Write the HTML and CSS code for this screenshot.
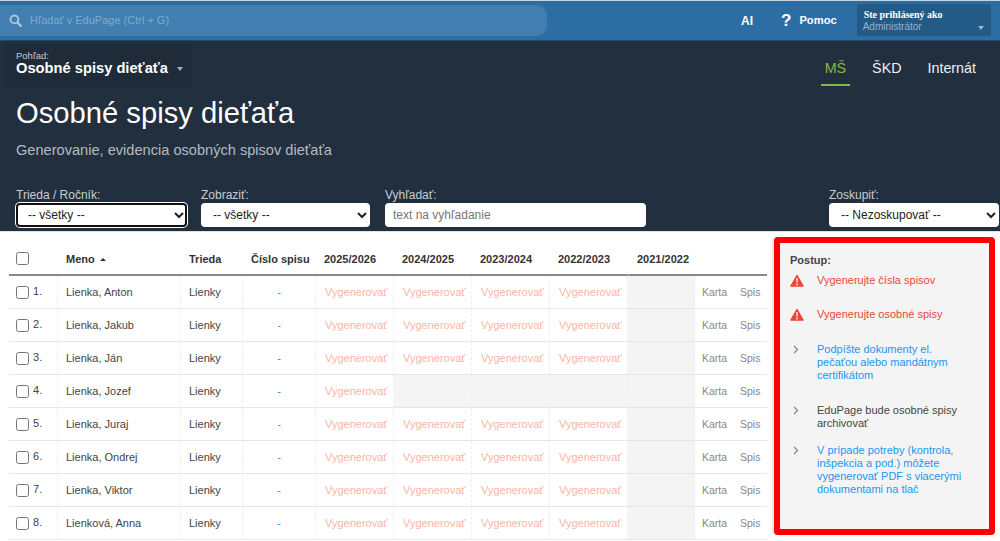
FILE: index.html
```html
<!DOCTYPE HTML>
<html lang="sk">
  <head>
    <meta charset="utf-8">
    <title>Osobné spisy dieťaťa</title>
    <link rel="stylesheet" href="styles.css">
  </head>
  <body>

    <div class="topbar">
      <div class="searchbox">
        <svg class="searchicon" width="13" height="13" viewBox="0 0 13 13"><circle cx="5.4" cy="5.4" r="3.9" fill="none" stroke="#a9c6dc" stroke-width="2"/><path d="M8.4 8.4l3.4 3.4" stroke="#a9c6dc" stroke-width="2.4" stroke-linecap="round"/></svg>
        <span>Hľadať v EduPage (Ctrl + G)</span>
      </div>
      <a class="top-ai">AI</a>
      <a class="top-help"><b>?</b><span>Pomoc</span></a>
      <div class="userbox">
        <div class="userbox-title">Ste prihlásený ako</div>
        <div class="userbox-name">Administrátor</div>
        <i class="caret caret-user"></i>
      </div>
    </div>

    <div class="header">
      <div class="header-top">
        <div class="viewbox">
          <div class="viewbox-label">Pohľad:</div>
          <div class="viewbox-name">Osobné spisy dieťaťa <i class="caret caret-view"></i></div>
        </div>
        <div class="tabs">
          <a class="tab tab-active">MŠ</a>
          <a class="tab">ŠKD</a>
          <a class="tab">Internát</a>
        </div>
      </div>
      <h1>Osobné spisy dieťaťa</h1>
      <p class="subtitle">Generovanie, evidencia osobných spisov dieťaťa</p>
      <div class="filters">
        <label class="filter filter-class">Trieda / Ročník:
          <select class="focused"><option>-- všetky --</option></select>
        </label>
        <label class="filter filter-show">Zobraziť:
          <select><option>-- všetky --</option></select>
        </label>
        <label class="filter filter-search">Vyhľadať:
          <input type="text" placeholder="text na vyhľadanie">
        </label>
        <label class="filter filter-group">Zoskupiť:
          <select><option>-- Nezoskupovať --</option></select>
        </label>
      </div>
    </div>

    <div class="main">
      <div class="tablewrap">
        <table class="list">
          <colgroup>
            <col class="c-check"><col class="c-name"><col class="c-class"><col class="c-num">
            <col class="c-year"><col class="c-year"><col class="c-year"><col class="c-year">
            <col class="c-last"><col class="c-card"><col class="c-file">
          </colgroup>
          <thead>
            <tr>
              <th><input type="checkbox"></th>
              <th>Meno <i class="caret-up"></i></th>
              <th>Trieda</th>
              <th>Číslo spisu</th>
              <th>2025/2026</th>
              <th>2024/2025</th>
              <th>2023/2024</th>
              <th>2022/2023</th>
              <th>2021/2022</th>
              <th></th>
              <th></th>
            </tr>
          </thead>
          <tbody>
            <tr>
              <td><input type="checkbox"> 1.</td><td>Lienka, Anton</td><td>Lienky</td><td class="num">-</td>
              <td class="gen">Vygenerovať</td><td class="gen">Vygenerovať</td><td class="gen">Vygenerovať</td><td class="gen">Vygenerovať</td>
              <td class="empty"></td><td class="act">Karta</td><td class="act">Spis</td>
            </tr>
            <tr>
              <td><input type="checkbox"> 2.</td><td>Lienka, Jakub</td><td>Lienky</td><td class="num">-</td>
              <td class="gen">Vygenerovať</td><td class="gen">Vygenerovať</td><td class="gen">Vygenerovať</td><td class="gen">Vygenerovať</td>
              <td class="empty"></td><td class="act">Karta</td><td class="act">Spis</td>
            </tr>
            <tr>
              <td><input type="checkbox"> 3.</td><td>Lienka, Ján</td><td>Lienky</td><td class="num">-</td>
              <td class="gen">Vygenerovať</td><td class="gen">Vygenerovať</td><td class="gen">Vygenerovať</td><td class="gen">Vygenerovať</td>
              <td class="empty"></td><td class="act">Karta</td><td class="act">Spis</td>
            </tr>
            <tr>
              <td><input type="checkbox"> 4.</td><td>Lienka, Jozef</td><td>Lienky</td><td class="num">-</td>
              <td class="gen">Vygenerovať</td><td class="empty"></td><td class="empty"></td><td class="empty"></td>
              <td class="empty"></td><td class="act">Karta</td><td class="act">Spis</td>
            </tr>
            <tr>
              <td><input type="checkbox"> 5.</td><td>Lienka, Juraj</td><td>Lienky</td><td class="num">-</td>
              <td class="gen">Vygenerovať</td><td class="gen">Vygenerovať</td><td class="gen">Vygenerovať</td><td class="gen">Vygenerovať</td>
              <td class="empty"></td><td class="act">Karta</td><td class="act">Spis</td>
            </tr>
            <tr>
              <td><input type="checkbox"> 6.</td><td>Lienka, Ondrej</td><td>Lienky</td><td class="num">-</td>
              <td class="gen">Vygenerovať</td><td class="gen">Vygenerovať</td><td class="gen">Vygenerovať</td><td class="gen">Vygenerovať</td>
              <td class="empty"></td><td class="act">Karta</td><td class="act">Spis</td>
            </tr>
            <tr>
              <td><input type="checkbox"> 7.</td><td>Lienka, Viktor</td><td>Lienky</td><td class="num">-</td>
              <td class="gen">Vygenerovať</td><td class="gen">Vygenerovať</td><td class="gen">Vygenerovať</td><td class="gen">Vygenerovať</td>
              <td class="empty"></td><td class="act">Karta</td><td class="act">Spis</td>
            </tr>
            <tr>
              <td><input type="checkbox"> 8.</td><td>Lienková, Anna</td><td>Lienky</td><td class="num">-</td>
              <td class="gen">Vygenerovať</td><td class="gen">Vygenerovať</td><td class="gen">Vygenerovať</td><td class="gen">Vygenerovať</td>
              <td class="empty"></td><td class="act">Karta</td><td class="act">Spis</td>
            </tr>
          </tbody>
        </table>
      </div>

      <div class="steps">
        <div class="steps-title">Postup:</div>
        <div class="step step-warn step-first">
          <svg width="14" height="13" viewBox="0 0 14 13"><path d="M7 1L13.4 12.2H.6z" fill="#f04438" stroke="#f04438" stroke-width="1" stroke-linejoin="round"/><path d="M6.2 4.2h1.6l-.3 4.6h-1zM6.2 9.7h1.6v1.5H6.2z" fill="#fff"/></svg>
          <span>Vygenerujte čísla spisov</span>
        </div>
        <div class="step step-warn">
          <svg width="14" height="13" viewBox="0 0 14 13"><path d="M7 1L13.4 12.2H.6z" fill="#f04438" stroke="#f04438" stroke-width="1" stroke-linejoin="round"/><path d="M6.2 4.2h1.6l-.3 4.6h-1zM6.2 9.7h1.6v1.5H6.2z" fill="#fff"/></svg>
          <span>Vygenerujte osobné spisy</span>
        </div>
        <div class="step step-link">
          <svg class="chev" width="14" height="13" viewBox="0 0 14 13"><path d="M4 3l3.5 3.5L4 10" fill="none" stroke="#7d8a96" stroke-width="1.3"/></svg>
          <span>Podpíšte dokumenty el. pečaťou alebo mandátnym certifikátom</span>
        </div>
        <div class="step step-plain">
          <svg class="chev" width="14" height="13" viewBox="0 0 14 13"><path d="M4 3l3.5 3.5L4 10" fill="none" stroke="#7d8a96" stroke-width="1.3"/></svg>
          <span>EduPage bude osobné spisy archivovať</span>
        </div>
        <div class="step step-link step-last">
          <svg class="chev" width="14" height="13" viewBox="0 0 14 13"><path d="M4 3l3.5 3.5L4 10" fill="none" stroke="#7d8a96" stroke-width="1.3"/></svg>
          <span>V prípade potreby (kontrola, inšpekcia a pod.) môžete vygenerovať PDF s viacerými dokumentami na tlač</span>
        </div>
      </div>
    </div>

  </body>
</html>
```

FILE: styles.css
```css
html,body{margin:0;padding:0;height:541px;overflow:hidden;}
body{font-family:"Liberation Sans",Arial,sans-serif;background-color:#fff;color:#333;}

.topbar{
	display:flex;
	align-items:center;
	height:41px;
	box-sizing:border-box;
	border-top:1px solid #c8d4de;
	border-bottom:1px solid #1d4a70;
	background-color:#2c6ea3;
}
.searchbox{
	display:flex;
	align-items:center;
	width:547px;
	height:31px;
	margin-top:-1px;
	border-radius:0 11px 11px 0;
	background-color:#427fb0;
	color:#7fabcd;
	font-size:11px;
}
.searchicon{margin:0 8px 0 9px;}
.top-ai{margin-left:194px;color:#fff;font-size:12px;font-weight:bold;}
.top-help{display:flex;align-items:center;margin-left:28px;color:#fff;font-size:11.2px;font-weight:bold;}
.top-help b{font-size:17px;margin-right:8px;}
.top-help span{margin-top:-2px;}
.userbox{
	position:relative;
	width:134px;
	height:32px;
	box-sizing:border-box;
	margin-left:20px;
	margin-top:-1px;
	padding:5px 6px;
	border-radius:2px;
	background-color:#235a86;
}
.userbox-title{color:#fff;font-family:"Liberation Serif",serif;font-size:10px;font-weight:bold;line-height:11px;padding-left:1px;}
.userbox-name{color:#8fb3d2;font-size:10px;line-height:14px;}
.caret{display:inline-block;width:0;height:0;border-left:3.5px solid transparent;border-right:3.5px solid transparent;border-top:4px solid #9bb6cd;}
.caret-user{position:absolute;right:7px;bottom:6px;}
.caret-view{vertical-align:middle;margin-left:5px;border-top-color:#a7b0ba;}
.caret-up{display:inline-block;width:0;height:0;margin-left:2px;vertical-align:middle;border-left:3px solid transparent;border-right:3px solid transparent;border-bottom:3px solid #333;}

.header{
	height:191px;
	box-sizing:border-box;
	padding:3px 0 0 16px;
	background-color:#222f3e;
	color:#fff;
	border-bottom:1px solid #dfe3e6;
}
.header-top{display:flex;justify-content:space-between;align-items:flex-start;}
.viewbox{
	margin-left:-11px;
	padding:7px 11px 8px;
	width:165px;
	height:28px;
	background-color:#1f2b39;
}
.viewbox-label{font-size:9.5px;line-height:10px;color:#c4cad0;}
.viewbox-name{font-size:14.7px;line-height:14px;font-weight:bold;white-space:nowrap;}
.tabs{display:flex;margin-top:10px;margin-right:20px;}
.tab{padding:0 4px;height:32px;margin-left:18px;line-height:28px;font-size:14.3px;box-sizing:border-box;color:#eef1f3;}
.tab-active{color:#84ba3f;border-bottom:2px solid #84ba3f;}

h1{margin:7px 0 0;font-size:29.2px;font-weight:normal;line-height:38px;}
.subtitle{margin:9px 0 0;font-size:14.6px;line-height:18px;color:#b4bbc2;}

.filters{display:flex;margin-top:29px;}
.filter{display:block;font-size:12px;line-height:15px;color:#c8cdd2;}
.filter select,.filter input{
	display:block;
	box-sizing:border-box;
	height:24px;
	border:0;
	border-radius:4px;
	background-color:#fff;
	font-family:"Liberation Sans",Arial,sans-serif;
	font-size:12px;
	color:#222;
}
.filter select{padding-left:8px;}
.filter input{padding:0 8px;}
.filter input::placeholder{color:#777;}
.filter select.focused{outline:2px solid #111;outline-offset:-2px;box-shadow:0 0 0 1px #fff;}
.filter-class{width:171px;margin-right:14px;}
.filter-class select{width:171px;}
.filter-show{width:169px;margin-right:15px;}
.filter-show select{width:169px;}
.filter-search{width:261px;margin-right:183px;}
.filter-search input{width:261px;}
.filter-group{width:170px;}
.filter-group select{width:170px;}

.main{display:flex;align-items:flex-start;}
.tablewrap{width:758px;margin-left:9px;padding-top:11px;}
.list{width:758px;table-layout:fixed;border-collapse:separate;border-spacing:0;font-size:11px;}
.c-check{width:49px;}
.c-name{width:123px;}
.c-class{width:62px;}
.c-num{width:73px;}
.c-year{width:78px;}
.c-last{width:67px;}
.c-card{width:38px;}
.c-file{width:34px;}
.list th{
	height:33px;
	padding:0 0 0 8px;
	box-sizing:border-box;
	border-bottom:2px solid #888;
	text-align:left;
	font-size:11px;
	color:#333;
}
.list th:nth-child(1){padding-left:7px;}
.list th:nth-child(9){border-left:1px solid #fff;}
.list td{
	height:33px;
	padding:0 0 0 8px;
	box-sizing:border-box;
	border-bottom:1px solid #e6e6e6;
	border-right:1px dashed #eee;
	color:#444;
	white-space:nowrap;
}
.list td:first-child{padding-left:7px;}
.list input[type=checkbox]{width:13px;height:13px;margin:0 1px 0 0;vertical-align:middle;}
.list td.num{text-align:center;color:#2196f3;padding:0;}
.list td.gen{color:#fbb5a5;padding-left:9px;}
.list td.empty{background-color:#f4f4f4;}
.list td.act{color:#888;font-size:10.5px;border-right:0;padding-left:7px;}

.steps{
	width:221px;
	height:298px;
	box-sizing:border-box;
	margin:5px 0 0 7px;
	padding:11px 10px 0 10px;
	border:6px solid #f00;
	border-radius:4px;
	background-color:#f4f4f4;
	box-shadow:-2px 0 0 #eaeaea;
	font-size:11px;
	line-height:13px;
}
.steps-title{font-weight:bold;color:#444;margin-bottom:7px;}
.step{display:flex;margin-top:21px;color:#444;}
.step-first{margin-top:0;}
.step svg{flex:none;margin-right:13px;}
.step span{max-width:150px;}
.step-warn{color:#f04438;}
.step-link{color:#2196f3;margin-top:22px;}
.step-plain{margin-top:22px;}
.step-last{margin-top:14px;}
```
